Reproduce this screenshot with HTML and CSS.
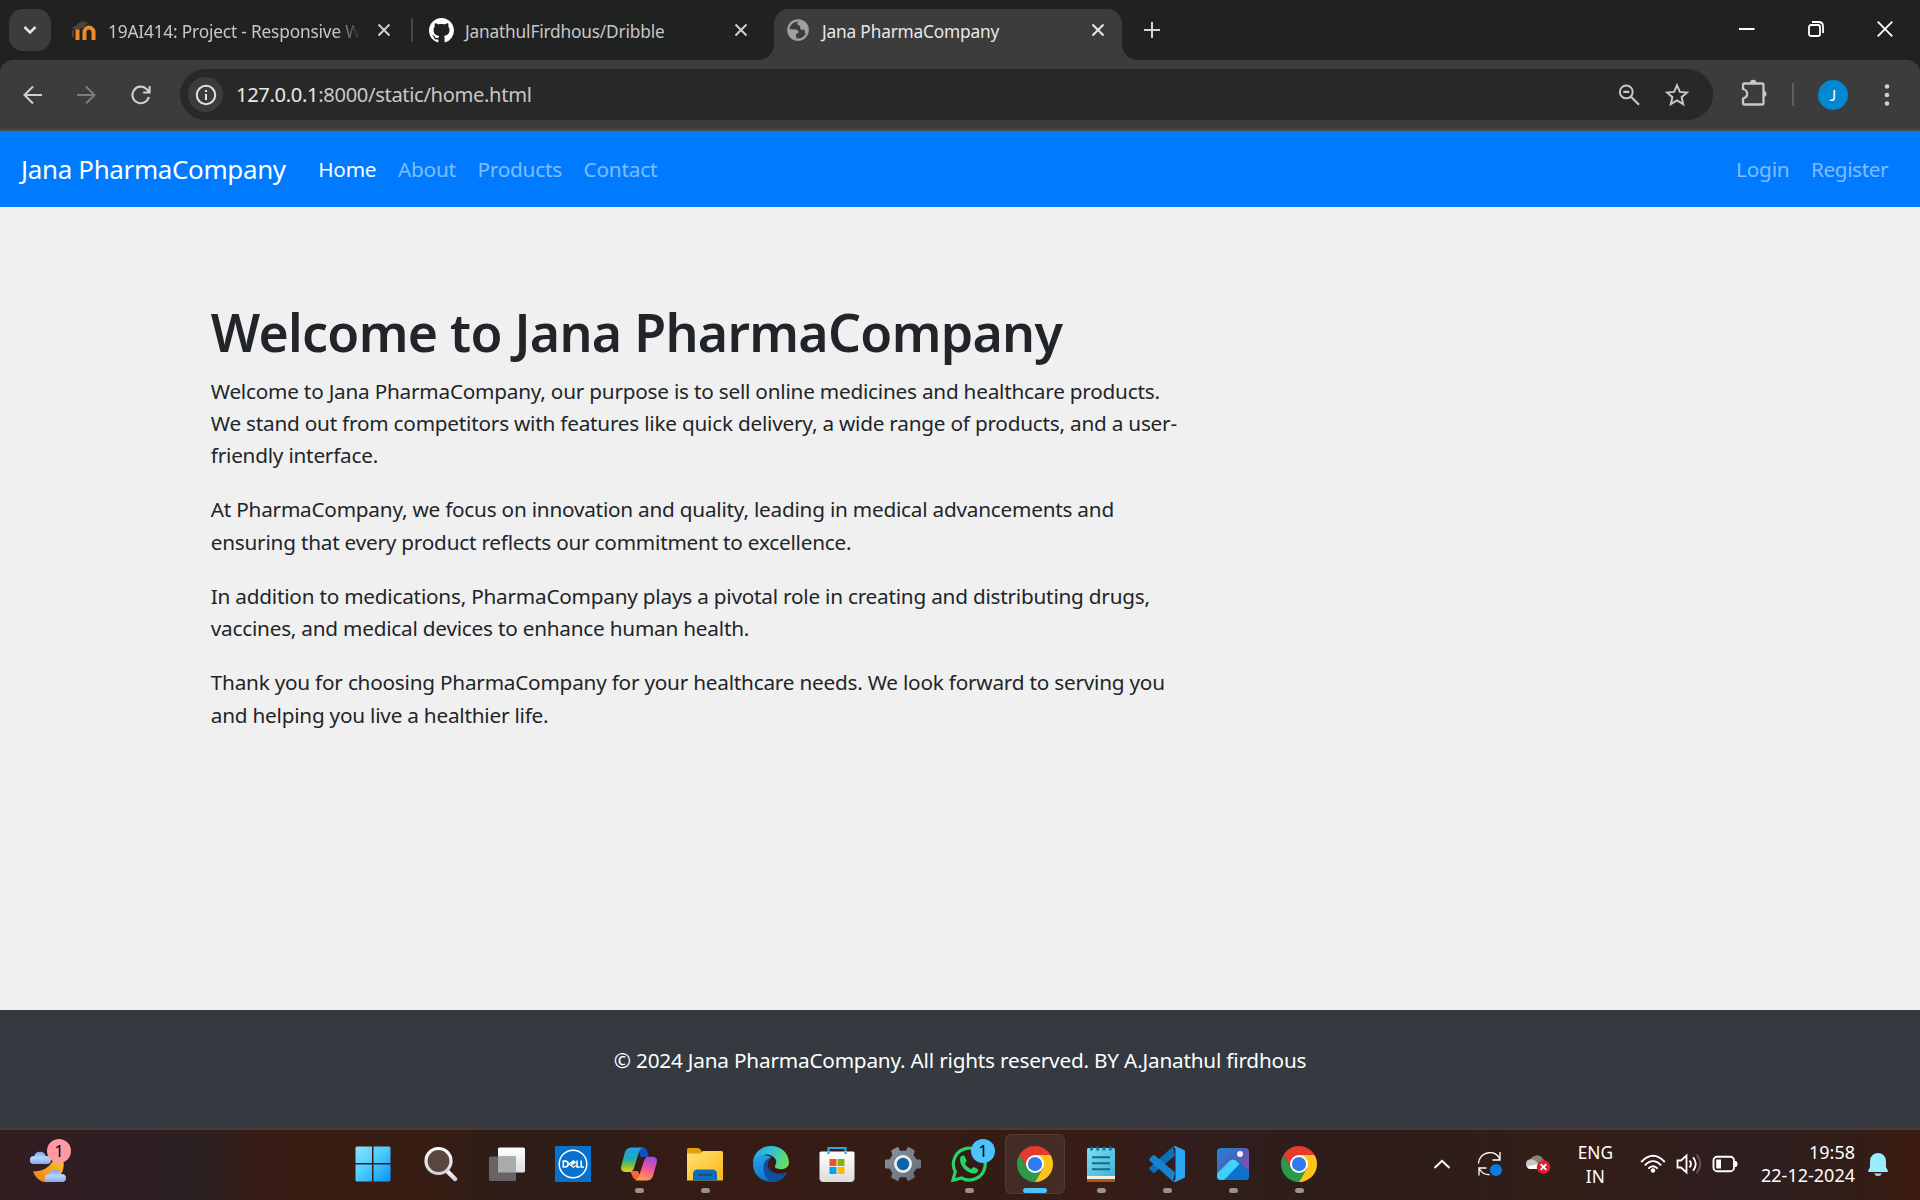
FILE: index.html
```html
<!DOCTYPE html>
<html lang="en">
<head>
<meta charset="utf-8">
<title>Jana PharmaCompany</title>
<link rel="stylesheet" href="styles.css">
</head>
<body>
<div class="desktop">

  <header class="tabstrip">
    <button class="tab-search" aria-label="Search tabs"><svg width="14" height="10" viewBox="0 0 14 10"><path d="M1.5 2l5.500 5.500L12.500 2" fill="none" stroke="#e3e3e3" stroke-width="2.500"/></svg></button>
    <div class="tab tab-first">
      <svg class="fav" width="24" height="20" viewBox="0 0 24 20">
        <path d="M0 7L10 0l6 2-6 5.500L4 9z" fill="#4a4443"/><path d="M1 9v7" stroke="#6b4a38" stroke-width="1.500"/>
        <path d="M5.500 19V8.500M12.500 19v-8a4.500 4.500 0 0 1 9 0v8" fill="none" stroke="#f08a24" stroke-width="4"/>
      </svg>
      <span class="tab-title faded">19AI414: Project - Responsive W</span>
      <svg class="close" width="14" height="14" viewBox="0 0 14 14"><path d="M1.500 1.500l11 11m0-11l-11 11" stroke="#d0d0d0" stroke-width="2"/></svg>
    </div>
    <i class="tab-divider"></i>
    <div class="tab tab-second">
      <svg class="fav" width="25" height="25" viewBox="0 0 16 16"><path fill="#fff" d="M8 0C3.580 0 0 3.580 0 8c0 3.540 2.290 6.530 5.470 7.590.4.070.55-.17.55-.38 0-.19-.01-.82-.01-1.490-2.010.37-2.530-.49-2.690-.94-.09-.23-.48-.94-.82-1.130-.28-.15-.68-.52-.01-.53.63-.01 1.080.58 1.230.82.72 1.210 1.870.87 2.330.66.070-.52.28-.87.51-1.070-1.780-.2-3.640-.89-3.640-3.950 0-.87.31-1.590.82-2.150-.08-.2-.36-1.020.08-2.120 0 0 .67-.21 2.200.82.64-.18 1.320-.27 2-.27s1.360.09 2 .27c1.530-1.040 2.200-.82 2.200-.82.44 1.100.16 1.920.08 2.120.51.56.82 1.270.82 2.150 0 3.070-1.870 3.750-3.650 3.950.29.25.54.73.54 1.480 0 1.070-.01 1.930-.01 2.200 0 .21.15.46.55.38A8.010 8.010 0 0 0 16 8c0-4.420-3.580-8-8-8z"/></svg>
      <span class="tab-title">JanathulFirdhous/Dribble</span>
      <svg class="close" width="14" height="14" viewBox="0 0 14 14"><path d="M1.500 1.500l11 11m0-11l-11 11" stroke="#d0d0d0" stroke-width="2"/></svg>
    </div>
    <div class="tab tab-active">
      <svg class="fav" width="22" height="22" viewBox="0 0 22 22">
        <circle cx="11" cy="11" r="9.700" fill="#3c3c3c" stroke="#9aa0a6" stroke-width="2.200"/>
        <path d="M13 1.500c-1 1-2.500 1.500-3 3 .3 1.500 2 2 3 2.500.5 1.500-.5 2.500 1 3.500s2.500-.5 3.500.5c.8 1-.2 2.500.7 3.300l2.300-.3C22 8 18.500 2 13 1.500zM1.500 10l7 .500c2 .2 3.500 1.500 3 3-.5 1-2 .8-2.500 2-.3 1.500.8 3 0 5C4 19.500 1.500 15 1.500 10z" fill="#9aa0a6"/>
      </svg>
      <span class="tab-title">Jana PharmaCompany</span>
      <svg class="close" width="14" height="14" viewBox="0 0 14 14"><path d="M1.500 1.500l11 11m0-11l-11 11" stroke="#e8e8e8" stroke-width="2.100"/></svg>
    </div>
    <svg class="new-tab" width="16" height="16" viewBox="0 0 16 16"><path d="M8 0v16M0 8h16" stroke="#d6d6d6" stroke-width="2"/></svg>
    <div class="window-controls">
      <svg width="16" height="16" viewBox="0 0 16 16"><path d="M0 8h15.500" stroke="#fff" stroke-width="2"/></svg>
      <svg width="16" height="16" viewBox="0 0 16 16"><rect x="1" y="4" width="11" height="11" rx="2" fill="none" stroke="#fff" stroke-width="1.800"/><path d="M4 1h6.500Q15 1 15 5.500V12" fill="none" stroke="#fff" stroke-width="1.800"/></svg>
      <svg width="16" height="16" viewBox="0 0 16 16"><path d="M.7.7l14.600 14.600m0-14.600L.7 15.300" stroke="#fff" stroke-width="1.800"/></svg>
    </div>
  </header>

  <div class="toolbar">
    <svg class="back" width="20" height="20" viewBox="0 0 20 20"><path d="M19 10H2M10 1.500L1.500 10l8.500 8.500" fill="none" stroke="#d0d0d0" stroke-width="2"/></svg>
    <svg class="forward" width="20" height="20" viewBox="0 0 20 20"><path d="M1 10h17M10 1.500l8.500 8.500-8.500 8.500" fill="none" stroke="#7d7d7d" stroke-width="2"/></svg>
    <svg class="reload" width="20" height="20" viewBox="0 0 20 20"><path d="M17.800 12A8.300 8.300 0 1 1 15.800 4.200L18 6.500M18.600 1v6.500h-6.500" fill="none" stroke="#d0d0d0" stroke-width="2.100"/></svg>
    <div class="address">
      <span class="site-info"><svg width="22" height="22" viewBox="0 0 22 22"><circle cx="11" cy="11" r="9.200" fill="none" stroke="#e3e3e3" stroke-width="2"/><path d="M11 10v6M11 6v2" stroke="#e3e3e3" stroke-width="2"/></svg></span>
      <span class="url"><b>127.0.0.1</b>:8000/static/home.html</span>
      <svg class="zoom-icon" width="22" height="22" viewBox="0 0 22 22"><circle cx="8.300" cy="7.900" r="6.400" fill="none" stroke="#c7c7c7" stroke-width="2"/><path d="M5.300 7.900h6M13 12.700l8 8" stroke="#c7c7c7" stroke-width="2.200"/></svg>
      <svg class="star" width="24" height="24" viewBox="0 0 24 24"><path d="M12 2.300l2.900 6.600 7.100.6-5.400 4.700 1.600 7-6.200-3.700-6.200 3.700 1.600-7L2 9.500l7.100-.6z" fill="none" stroke="#c7c7c7" stroke-width="2"/></svg>
    </div>
    <svg class="puzzle" width="26" height="28" viewBox="0 0 26 28"><path d="M3.500 4.500H21a1.500 1.500 0 0 1 1.500 1.500v18a1.500 1.500 0 0 1-1.500 1.500H3.500A1.500 1.500 0 0 1 2 24v-4.500c5.500-1.500 5.500-8 0-9.500V6a1.500 1.500 0 0 1 1.500-1.500z" fill="none" stroke="#c7c7c7" stroke-width="2.300"/><path d="M9 4a3.200 3.200 0 0 1 6.400 0zM22.500 12a3 3 0 0 1 0 6z" fill="#c7c7c7"/></svg>
    <i class="toolbar-divider"></i>
    <span class="avatar">J</span>
    <svg class="dots" width="6" height="22" viewBox="0 0 6 22" fill="#d0d0d0"><circle cx="3" cy="2.500" r="2.300"/><circle cx="3" cy="11" r="2.300"/><circle cx="3" cy="19.500" r="2.300"/></svg>
  </div>

  <nav class="navbar">
    <a class="brand">Jana PharmaCompany</a>
    <a class="nav-link active">Home</a>
    <a class="nav-link">About</a>
    <a class="nav-link">Products</a>
    <a class="nav-link">Contact</a>
    <a class="nav-link login">Login</a>
    <a class="nav-link register">Register</a>
  </nav>

  <main class="page">
    <div class="column">
      <h1>Welcome to Jana PharmaCompany</h1>
      <p>Welcome to Jana PharmaCompany, our purpose is to sell online medicines and healthcare products. <br>We stand out from competitors with features like quick delivery, a wide range of products, and a user-<br>friendly interface.</p>
      <p>At PharmaCompany, we focus on innovation and quality, leading in medical advancements and <br>ensuring that every product reflects our commitment to excellence.</p>
      <p>In addition to medications, PharmaCompany plays a pivotal role in creating and distributing drugs, <br>vaccines, and medical devices to enhance human health.</p>
      <p>Thank you for choosing PharmaCompany for your healthcare needs. We look forward to serving you <br>and helping you live a healthier life.</p>
    </div>
  </main>

  <footer class="footer">© 2024 Jana PharmaCompany. All rights reserved. BY A.Janathul firdhous</footer>

  <div class="taskbar">
    <svg width="0" height="0" class="defs">
      <defs>
        <linearGradient id="win" x1="0" y1="0" x2="1" y2="1"><stop offset="0" stop-color="#8fe0ff"/><stop offset=".45" stop-color="#4ccfff"/><stop offset="1" stop-color="#0a91fb"/></linearGradient>
        <linearGradient id="cloud" x1="0" y1="0" x2="0" y2="1"><stop offset="0" stop-color="#7fa5ea"/><stop offset=".5" stop-color="#b8d4fb"/><stop offset="1" stop-color="#86a9ee"/></linearGradient>
        <linearGradient id="moon" x1="0" y1="1" x2="1" y2="0"><stop offset="0" stop-color="#ee7a1f"/><stop offset="1" stop-color="#fbc02d"/></linearGradient>
        <linearGradient id="lens" x1="0" y1="0" x2="0" y2="1"><stop offset="0" stop-color="#fff"/><stop offset="1" stop-color="#cfd3da"/></linearGradient>
        <linearGradient id="sheet" x1="0" y1="0" x2="0" y2="1"><stop offset="0" stop-color="#fff"/><stop offset="1" stop-color="#dcdcdc"/></linearGradient>
        <linearGradient id="copA" x1="0" y1="0" x2="0" y2="1"><stop offset="0" stop-color="#1f9ff0"/><stop offset=".45" stop-color="#23a7b6"/><stop offset=".75" stop-color="#7cc13f"/><stop offset="1" stop-color="#f4cf1c"/></linearGradient>
        <linearGradient id="copB" x1=".6" y1="0" x2=".3" y2="1"><stop offset="0" stop-color="#a04be8"/><stop offset=".5" stop-color="#f0588f"/><stop offset="1" stop-color="#ffa04f"/></linearGradient>
        <linearGradient id="folder" x1="0" y1="0" x2="1" y2="1"><stop offset="0" stop-color="#ffe07a"/><stop offset="1" stop-color="#f9b90f"/></linearGradient>
        <linearGradient id="edgeT" x1="0" y1=".3" x2="1" y2=".6"><stop offset="0" stop-color="#25a8e4"/><stop offset=".5" stop-color="#33c4d0"/><stop offset="1" stop-color="#6be052"/></linearGradient>
        <linearGradient id="edgeB" x1="0" y1="0" x2=".4" y2="1"><stop offset="0" stop-color="#29a7ea"/><stop offset="1" stop-color="#0c6fca"/></linearGradient>
        <linearGradient id="gear" x1="0" y1="0" x2="1" y2="1"><stop offset="0" stop-color="#8e979f"/><stop offset="1" stop-color="#616a72"/></linearGradient>
        <linearGradient id="note" x1="0" y1="0" x2="1" y2="1"><stop offset="0" stop-color="#7fdcf2"/><stop offset="1" stop-color="#43b2d4"/></linearGradient>
        <linearGradient id="photo" x1="0" y1="0" x2="1" y2="1"><stop offset="0" stop-color="#1f86dc"/><stop offset=".45" stop-color="#4a61b8"/><stop offset=".7" stop-color="#7a56b0"/></linearGradient>
        <linearGradient id="hill" x1="0" y1="1" x2="1" y2="0"><stop offset="0" stop-color="#3bcdf8"/><stop offset="1" stop-color="#45d4fb"/></linearGradient>
      </defs>
      <symbol id="chrome" viewBox="0 0 48 48">
        <path d="M24 12H44.780A24 24 0 0 0 3.220 12L13.610 30 24 24z" fill="#e53b2e"/>
        <path d="M13.610 30L3.220 12A24 24 0 0 0 24 48L34.390 30 24 24z" fill="#2a9a48"/>
        <path d="M34.390 30L24 48A24 24 0 0 0 44.780 12H24v12z" fill="#fcc31e"/>
        <circle cx="24" cy="24" r="12" fill="#fff"/><circle cx="24" cy="24" r="9.500" fill="#2f7bee"/>
      </symbol>
      <symbol id="cloudshape" viewBox="0 0 21 14"><path d="M4 14a4 4 0 0 1-.5-8h.8a6 6 0 0 1 11.400 0h1.300a4 4 0 0 1 0 8z" fill="url(#cloud)"/></symbol>
    </svg>

    <div class="widgets">
      <svg width="42" height="42" viewBox="0 0 42 42">
        <path d="M3 29.500q13 .5 20-10.500L33.500 20c3 18-22.500 30-30.500 9.500z" fill="url(#moon)"/>
        <use href="#cloudshape" x="0" y="8" width="21" height="14"/><use href="#cloudshape" x="15" y="26" width="21" height="14"/>
      </svg>
      <span class="badge pink">1</span>
    </div>

    <div class="apps">
      <div class="app"><svg class="start-icon" width="36" height="36" viewBox="0 0 36 36" fill="url(#win)"><path d="M.5 2Q.5.5 2 .5h15v16.600H.5zM18.500.5H34q1.500 0 1.500 1.500v15.100h-17zM.5 18.600H17v16.900H2q-1.500 0-1.500-1.500zM18.500 18.600h17V34q0 1.500-1.500 1.500H18.500z"/></svg></div>
      <div class="app"><svg class="search-icon" width="36" height="36" viewBox="0 0 36 36"><path d="M24 25l8 8" stroke="url(#lens)" stroke-width="4.500" stroke-linecap="round"/><circle cx="15.500" cy="15" r="12.500" fill="#5b463f" stroke="url(#lens)" stroke-width="3.200"/></svg></div>
      <div class="app"><svg width="36" height="36" viewBox="0 0 36 36"><rect x="9" y="1.500" width="27" height="25" rx="1.500" fill="url(#sheet)"/><rect x="0" y="10.500" width="27" height="24.500" rx="1.500" fill="#6c6c6c" fill-opacity=".9"/><path d="M9 10.500h18v16H9z" fill="#aaa"/></svg></div>
      <div class="app"><svg width="36" height="36" viewBox="0 0 36 36"><path fill="#0672cb" d="M0 0h36v36H0z"/><circle cx="18" cy="18" r="13.800" fill="none" stroke="#fff" stroke-width="1.500"/><path d="M8.300 15.100v5.900h1.900a2.950 2.950 0 0 0 0-5.900zM22 14.500v6.500h2.800M26.200 14.500v6.500h2.800" fill="none" stroke="#fff" stroke-width="1.600"/><path d="M14 18l4.500-3.300 2 1.500-4.300 3.300M14 18l4.500 3.300 2.500-1.900M16.200 17.800l3.500-2.600" fill="none" stroke="#fff" stroke-width="1.100"/></svg></div>
      <div class="app"><svg width="36" height="36" viewBox="0 0 36 36"><path d="M9 25h8l4 9h-4q-5 0-6-5z" fill="#f4673c"/><path d="M17 1.500h4.500q4 0 5 4.500l1 5h-8z" fill="#164fc5"/><path d="M9.500 1.500H22q-3 1-4.200 5L13 22q-1.200 4-5 4H4q-5-.5-3.700-6L4 6q1.300-4 5.500-4.500z" fill="url(#copA)"/><path d="M26.500 34.500H14q3-1 4.200-5L23 15q1.200-4.300 5-4.300h4q5 .5 3.700 6L32 30q-1.300 4-5.500 4.500z" fill="url(#copB)"/></svg><i class="dot"></i></div>
      <div class="app"><svg width="36" height="36" viewBox="0 0 36 36"><path d="M0 3.500Q0 2 1.500 2H11q1 0 2 1l2 2.500V10H0z" fill="#e3a005"/><path d="M0 7.500h12q1.500 0 2.500-1L16 5h18.500Q36 5 36 6.500v28H0z" fill="url(#folder)"/><path d="M6 34.500V28q0-4.500 4.500-4.500h15Q30 23.500 30 28v6.500z" fill="#0f6cbd"/><path d="M11 28.800h14" stroke="#0a4a86" stroke-width="1.600"/></svg><i class="dot"></i></div>
      <div class="app"><svg width="36" height="36" viewBox="0 0 36 36"><path d="M18 0C6 0 .5 9 0 16c5-8 18-11 23-2 1 4-1.500 5-1 7 1.500 3 13 4 14-4C36 7 28 0 18 0z" fill="url(#edgeT)"/><path d="M0 18C0 28 8 36 18.500 36c7 0 12-3.500 14.500-8-9 3-19-1-19-10 0-3 2-6 5-6.500C12 7 1 8 0 18z" fill="url(#edgeB)"/><path d="M10.500 21c0-5 3-9 8.500-9.500-3.500 2-5.500 6.500-3.500 10.500 3 5.500 10 7 17.500 4.500q1-.2.200 1.300C30 33 25 36 18.500 36c-5-1.500-8-8.500-8-15z" fill="#114f9e"/></svg></div>
      <div class="app"><svg width="36" height="36" viewBox="0 0 36 36"><path d="M9.500 8V2h17v6" fill="none" stroke="#28a8e0" stroke-width="2.200"/><path d="M.5 7Q.5 5.500 2 5.500h32q1.500 0 1.500 1.500v25q0 4-4 4h-27q-4 0-4-4z" fill="url(#sheet)"/><path d="M9.500 5.500V8M26.500 5.500V8" stroke="#28a8e0" stroke-width="2.200"/><path d="M10.500 13h7v7h-7z" fill="#f25022"/><path d="M18.500 13h7v7h-7z" fill="#7fba00"/><path d="M10.500 21h7v7h-7z" fill="#00a4ef"/><path d="M18.500 21h7v7h-7z" fill="#ffb900"/></svg></div>
      <div class="app"><svg width="36" height="36" viewBox="0 0 36 36"><path d="M11.500 1.500q1-.8 2 0L15 4.800h6l1.500-3.300q1-.8 2 0l4.500 2.500q1 .5.700 1.500L28.500 9l3 4.500h3.700q.8.200.8 1.500v6q0 1.300-.8 1.500h-3.700l-3 4.500 1.200 3.500q.3 1-.7 1.500l-4.500 2.500q-1 .8-2 0L21 31.200h-6l-1.500 3.300q-1 .8-2 0L7 32q-1-.5-.7-1.500L7.500 27l-3-4.500H.8Q0 22.300 0 21v-6q0-1.300.8-1.500h3.700l3-4.500-1.200-3.500Q6 4.500 7 4z" fill="url(#gear)"/><circle cx="18" cy="18" r="7.600" fill="#0d62ae" stroke="#eceef0" stroke-width="2.800"/></svg></div>
      <div class="app"><svg width="36" height="36" viewBox="0 0 36 36"><path d="M2 34.200l2.300-8.500A15.900 15.900 0 1 1 10.500 32z" fill="none" stroke="#25d366" stroke-width="3.200"/><path d="M9.200 12c.5-1.700 1.500-2.500 3-2.500 1 0 1.300.3 1.800 1.400l1.400 3.300c.4 1-.2 1.700-1.500 3.200 1.500 2.800 3.500 4.700 6.300 5.800 1.400-1.800 2-2.300 3-1.900l3.300 1.600c.8.500.8 1 .5 2-1 2.200-3.300 3.200-6 2.500C14 25.800 8 18.500 9.200 12z" fill="#25d366"/></svg><span class="badge blue">1</span><i class="dot"></i></div>
      <div class="app focused"><svg width="36" height="36"><use href="#chrome"/></svg><i class="dot wide"></i></div>
      <div class="app"><svg width="36" height="36" viewBox="0 0 36 36"><path d="M4 31h28v5H4z" fill="#b3510c"/><path d="M4 28h28v5H4z" fill="#eee"/><path d="M4 3.500Q4 2 5.500 2h25Q32 2 32 3.500V30H4z" fill="url(#note)"/><path d="M8.500.5v4M14.700.5v4M21 .5v4M27.300.5v4" stroke="#0b6e8c" stroke-width="2.600"/><path d="M9 11.200h18M9 17.200h18M9 23.200h18" stroke="#0b6e8c" stroke-width="1.900"/></svg><i class="dot"></i></div>
      <div class="app"><svg width="36" height="36" viewBox="0 0 36 36"><path d="M26 9.500L6 26.500q-1 .8-2 .2L.7 23.500q-1-1.200 0-2.300L24 .5z" fill="#0a6fb5"/><path d="M26 26.500L6 9.500q-1-.8-2-.2L.7 12.500q-1 1.200 0 2.300L24 35.500z" fill="#1583cf"/><path d="M26.500 0L36 4.500v27L26.500 36q-1.500 0-2.500-1 2.500 0 2.500-3V4q0-3-2.500-3 1-1 2.500-1z" fill="#2aa5f2"/></svg><i class="dot"></i></div>
      <div class="app"><svg width="36" height="36" viewBox="0 0 36 36"><rect x="2" y="2" width="32" height="32" rx="4" fill="url(#photo)"/><path d="M20 14.500q2-1 4 1l10 9.500v5q0 4-4 4H8z" fill="#0c72cd"/><path d="M2 27.500L14.500 15q3.500-3.200 7 0l3 3L9.500 33.500 8 34H6q-4 0-4-4z" fill="url(#hill)"/><circle cx="25" cy="8" r="3" fill="#f2f2f5"/></svg><i class="dot"></i></div>
      <div class="app"><svg width="36" height="36"><use href="#chrome"/></svg><i class="dot"></i></div>
    </div>

    <div class="tray">
      <svg class="chev" width="18" height="10" viewBox="0 0 18 10"><path d="M1.500 9L9 1.800 16.500 9" fill="none" stroke="#fff" stroke-width="2"/></svg>
      <svg class="sync" width="26" height="26" viewBox="0 0 26 26"><path d="M1.500 12.500C2 0 20 -2.500 23 9M23 1v8h-7.500M2 24.500V17h7.500M2.500 18q3.500 6 10 5.500" fill="none" stroke="#fff" stroke-width="1.300"/><circle cx="19" cy="19" r="6" fill="#0a7be0"/></svg>
      <svg class="onedrive" width="26" height="22" viewBox="0 0 26 22"><path d="M5 8a7 7 0 0 1 13-2q2 1 2 5L12 15z" fill="#8a807d"/><path d="M5 16a5 5 0 0 1-1-9.500q5-1 8.500 3l3 6.500z" fill="#c9c5c4"/><path d="M2 13.500L13 11v5H5q-2 0-3-2.500z" fill="#fff"/><circle cx="18.500" cy="14" r="6.800" fill="#d8232f"/><path d="M15.700 11.200l5.600 5.600m0-5.600l-5.600 5.600" stroke="#fff" stroke-width="1.700"/></svg>
      <div class="lang"><span>ENG</span><span>IN</span></div>
      <svg class="wifi" width="26" height="20" viewBox="0 0 26 20"><g fill="none" stroke="#fff" stroke-width="1.900"><path d="M1.200 8Q13-4.500 24.800 8M4.800 11.300q8.200-8.400 16.400 0M8.300 14.600q4.700-4.500 9.400 0"/></g><circle cx="13" cy="16.500" r="2.200" fill="#fff"/></svg>
      <svg class="sound" width="26" height="22" viewBox="0 0 26 22" fill="none" stroke-width="1.800"><path d="M1.500 7.500H5l5.500-5v17l-5.500-5H1.500z" stroke="#fff"/><path d="M13.500 7.500q3 3.500 0 7M17 4.300q5.500 6.700 0 13.400" stroke="#fff"/><path d="M20.500 1.800q7.500 9.200 0 18.400" stroke="#6b5650"/></svg>
      <svg class="battery" width="26" height="18" viewBox="0 0 26 18"><rect x="1.500" y="1.800" width="20.500" height="14.400" rx="3.500" fill="none" stroke="#fff" stroke-width="1.900"/><path d="M4.200 4.500H9v9H4.200zM23 6h1q1.500.5 1.500 3T24 12h-1z" fill="#fff"/></svg>
      <div class="clock"><span>19:58</span><span>22-12-2024</span></div>
      <svg class="bell" width="20" height="23" viewBox="0 0 20 23" fill="#98ecfe"><path d="M10 0a8 8 0 0 1 8 8v6l2 4q0 1-1 1H1q-1 0-1-1l2-4V8a8 8 0 0 1 8-8zM6 20.500h8q-1.500 2.500-4 2.500t-4-2.500z"/></svg>
    </div>
  </div>
</div>
</body>
</html>
```
FILE: styles.css
```css
* { box-sizing: border-box; }
body { margin: 0; background: #f0f0f0; font-family: "Noto Sans", "Open Sans", sans-serif; }
svg { display: block; flex: none; }
.desktop { width: 1920px; height: 1200px; display: flex; flex-direction: column; overflow: hidden; }

/* Browser tab strip */
.tabstrip { height: 60px; flex: none; background: #202221; display: flex; padding: 9px 0 0 9px; }
.tab-search { width: 42px; height: 42px; border: 0; border-radius: 14px; background: #3c3c3c; display: grid; place-items: center; padding: 0; flex: none; }
.tab { height: 42px; display: flex; align-items: center; flex: none; color: #c7c7c7; font-size: 17.280px; letter-spacing: -.175px; }
.tab-title { line-height: 24px; white-space: nowrap; padding-top: 3px; }
.close { margin-left: auto; }
.tab-first { width: 355px; margin-left: 21px; padding-right: 36px; }
.tab-first .tab-title { margin-left: 12px; width: 252px; overflow: hidden; }
.tab-first .fav { margin-top: 2px; }
.faded { -webkit-mask-image: linear-gradient(90deg, #000 228px, transparent 252px); mask-image: linear-gradient(90deg, #000 228px, transparent 252px); }
.tab-divider { width: 2px; height: 24px; margin: 9px 16px 0 -16px; background: #454746; flex: none; border-radius: 1px; }
.tab-second { width: 345px; padding: 0 26px 0 0; }
.tab-second .tab-title { margin-left: 11px; }
.tab-active { position: relative; width: 348px; height: 51px; background: #3c3c3c; border-radius: 15px 15px 0 0; color: #e8e8e8; padding: 0 17px 9px 13px; }
.tab-active::before, .tab-active::after { content: ""; position: absolute; bottom: 0; width: 15px; height: 15px; }
.tab-active::before { left: -15px; background: radial-gradient(circle at 0 0, transparent 14.500px, #3c3c3c 15px); }
.tab-active::after { right: -15px; background: radial-gradient(circle at 100% 0, transparent 14.500px, #3c3c3c 15px); }
.tab-active .tab-title { margin-left: 13px; }
.new-tab { margin: 13px 0 0 22px; }
.window-controls { display: flex; gap: 53px; margin: 12px 27px 0 auto; }

/* Address bar row */
.toolbar { height: 71px; flex: none; background: #3c3c3c; border-bottom: 2px solid #4a4a4a; display: flex; align-items: center; padding-left: 23px; position: relative; }
.toolbar::before, .toolbar::after { content: ""; position: absolute; top: 0; width: 12px; height: 12px; }
.toolbar::before { left: 0; background: radial-gradient(circle at 100% 100%, transparent 11.500px, #202221 12px); }
.toolbar::after { right: 0; background: radial-gradient(circle at 0 100%, transparent 11.500px, #202221 12px); }
.forward { margin-left: 33px; }
.reload { margin-left: 35px; }
.address { width: 1533px; height: 51px; border-radius: 26px; background: #282828; margin-left: 29px; display: flex; align-items: center; flex: none; padding-left: 8px; }
.site-info { width: 35px; height: 35px; border-radius: 50%; background: #3c3c3c; display: grid; place-items: center; }
.url { margin-left: 13px; padding-bottom: 2px; font-size: 20.160px; letter-spacing: -.350px; color: #c7c7c7; }
.url b { font-weight: 400; color: #e8e8e8; }
.zoom-icon { margin-left: auto; }
.star { margin: 0 24px 0 25px; }
.puzzle { margin: 0 0 4px 28px; }
.toolbar-divider { width: 2px; height: 23px; margin-left: 25px; background: #5f5f5f; }
.avatar { width: 30px; height: 30px; margin-left: 24px; border-radius: 50%; background: #0288d1; color: #fff; font-family: Lato, sans-serif; font-size: 15px; line-height: 30px; text-align: center; }
.dots { margin-left: 36px; }

/* Site navbar */
.navbar { height: 76px; flex: none; background: #007bff; display: flex; align-items: center; padding: 1px 21px 1px 21px; font-size: 20.740px; letter-spacing: -.200px; color: rgba(255,255,255,.5); }
.brand { color: #fff; font-size: 25.920px; letter-spacing: -.320px; margin-right: 21.600px; }
.nav-link { padding: 0 10.800px; }
.nav-link.active { color: #fff; }
.login { margin-left: auto; }
.register { letter-spacing: -.4px; }

/* Page content */
.page { flex: 1; background: #f0f0f0; padding-top: 93px; }
.column { width: 1026px; margin-left: 190.500px; padding: 0 20.250px; color: #212529; }
h1 { margin: 0 0 9.800px; font-size: 51.840px; letter-spacing: -.690px; font-weight: 600; line-height: 64.800px; white-space: nowrap; }
p { margin: 0 0 21.600px; font-size: 20.740px; letter-spacing: -.220px; line-height: 32.400px; white-space: nowrap; }
.footer { height: 118px; flex: none; background: #343a40; color: #fff; text-align: center; padding-top: 33.500px; font-size: 20.740px; letter-spacing: -.195px; line-height: 32.400px; }

/* Windows taskbar */
.taskbar { height: 72px; flex: none; border-top: 2px solid #4b3a37; display: flex; align-items: center; padding: 0 32px 2px 30px; background: linear-gradient(90deg, #331d20 0, #2e1f24 130px, #2b2021 200px, #371d15 260px, #381d14 430px, #2e1d17 500px, #2e1d17 590px, #371c14 690px, #341c15 1000px, #381d15 1090px, #301d1c 1200px, #2e1d1a 1400px, #331d17 1560px, #2e1f20 1760px, #321d16 1860px, #3e1a10 1920px); }
.defs { position: absolute; }
.badge { position: absolute; width: 24px; height: 24px; border-radius: 50%; color: #000; font-size: 16px; line-height: 24px; text-align: center; }
.widgets { position: relative; width: 42px; flex: none; }
.pink { left: 17px; top: -3px; background: #ff99a4; }
.widgets svg { margin-bottom: 2px; }
.apps { display: flex; margin-left: 273px; }
.app { position: relative; width: 60px; height: 60px; margin-right: 6px; flex: none; display: grid; place-items: center; border-radius: 6px; border: 1px solid transparent; }
.focused { background: rgba(255,255,255,.07); border-color: rgba(255,255,255,.08); }
.start-icon { margin-right: 4px; }
.search-icon { margin-right: 1px; }
.blue { right: 3px; top: 4px; background: #4cc2ff; }
.dot { position: absolute; left: 25px; bottom: 0; width: 9px; height: 5px; border-radius: 3px; background: #9b918f; }
.dot.wide { left: 17px; width: 24px; background: #4cc2ff; }
.tray { margin-left: auto; display: flex; align-items: center; color: #fff; font-size: 17.300px; line-height: 23.500px; }
.sync { margin-left: 26px; }
.onedrive { margin-left: 22px; }
.lang { display: flex; flex-direction: column; align-items: center; margin-left: 27px; }
.wifi { margin-left: 27px; }
.sound { margin-left: 10px; }
.battery { margin-left: 10px; }
.clock { display: flex; flex-direction: column; align-items: flex-end; margin-left: 23px; font-size: 18px; }
.lang { padding-top: 1px; }
.bell { margin-left: 13px; }
```
